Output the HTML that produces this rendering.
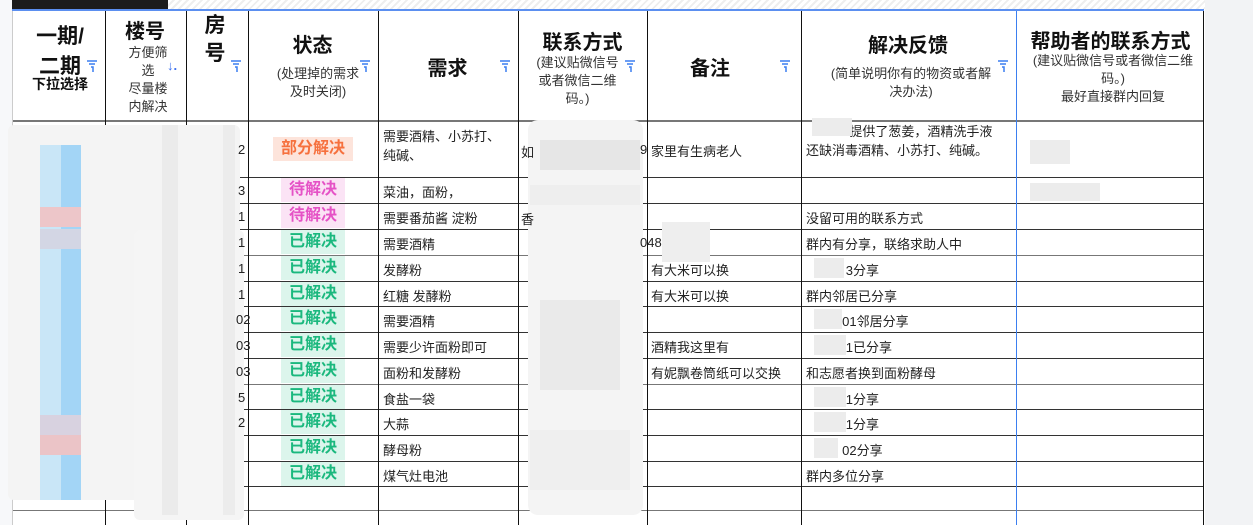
<!DOCTYPE html>
<html><head><meta charset="utf-8"><style>
*{margin:0;padding:0;box-sizing:border-box}
body{width:1253px;height:525px;background:#fff;position:relative;overflow:hidden;font-family:"Liberation Sans","Noto Sans CJK SC",sans-serif;color:#222}
.a{position:absolute}
.v{position:absolute;width:1px;background:#111}
.h{position:absolute;height:1px;background:#333;left:12px;width:1192px}
.hd{position:absolute;text-align:center;font-weight:bold;color:#111}
.sub{font-weight:normal;font-size:13px;color:#333;line-height:18px}
.t{position:absolute;font-size:13px;color:#222;white-space:nowrap}
.b{position:absolute;font-size:16px;font-weight:bold;text-align:center;line-height:24px;height:24px}
.g{color:#1bb87e;background:#dcf5ec;width:64px;left:281px}
.p{color:#e552c6;background:#fbe3f5;width:64px;left:281px}
.o{color:#f6713e;background:#fde4db;width:80px;left:273px}
.f{position:absolute;width:10px;height:12px}
.bl{position:absolute;background:#ececec}
</style></head><body>
<div class="a" style="left:1205px;top:0;width:48px;height:525px;background:#f2f3f5"></div>
<div class="a" style="left:168px;top:0;width:1037px;height:9px;background:repeating-linear-gradient(135deg,#fff 0 3px,#eee 3px 5px)"></div>
<div class="a" style="left:12px;top:0;width:156px;height:9px;background:#1c1c1c"></div>
<div class="a" style="left:12px;top:9px;width:1192px;height:2px;background:#5b8ff0"></div>
<div class="a" style="left:0;top:0;width:12px;height:525px;background:#f7f8fa"></div>

<!-- header -->
<div class="hd" style="left:18px;top:22px;width:84px;font-size:21px;line-height:30px">一期/<br>二期</div>
<div class="hd" style="left:20px;top:74px;width:80px;font-size:14px">下拉选择</div>
<div class="hd" style="left:110px;top:15px;width:70px;font-size:20px">楼号</div>
<div class="hd sub" style="left:116px;top:44px;width:64px;font-size:13px;line-height:18px">方便筛<br>选<br>尽量楼<br>内解决</div>
<div class="a" style="left:167px;top:58px;color:#3b6ff0;font-size:13px;font-weight:bold">↓.</div>
<div class="hd" style="left:195px;top:12px;width:40px;font-size:21px;line-height:28px">房<br>号</div>
<div class="hd" style="left:250px;top:29px;width:125px;font-size:20px">状态</div>
<div class="hd sub" style="left:268px;top:65px;width:100px">(处理掉的需求<br>及时关闭)</div>
<div class="hd" style="left:400px;top:52px;width:95px;font-size:20px">需求</div>
<div class="hd" style="left:520px;top:26px;width:125px;font-size:20px">联系方式</div>
<div class="hd sub" style="left:520px;top:54px;width:115px">(建议贴微信号<br>或者微信二维<br>码。)</div>
<div class="hd" style="left:660px;top:52px;width:100px;font-size:20px">备注</div>
<div class="hd" style="left:803px;top:29px;width:210px;font-size:20px">解决反馈</div>
<div class="hd sub" style="left:815px;top:65px;width:192px">(简单说明你有的物资或者解<br>决办法)</div>
<div class="hd" style="left:1018px;top:25px;width:185px;font-size:20px">帮助者的联系方式</div>
<div class="hd sub" style="left:1027px;top:52px;width:172px">(建议贴微信号或者微信二维<br>码。)<br>最好直接群内回复</div>

<!-- filter icons -->
<svg class="f" style="left:87px;top:60px" viewBox="0 0 10 12"><path d="M0 1h10M2 4h6M4 7h2v5" stroke="#3b7ff0" stroke-width="1.5" fill="none"/></svg>
<svg class="f" style="left:231px;top:60px" viewBox="0 0 10 12"><path d="M0 1h10M2 4h6M4 7h2v5" stroke="#3b7ff0" stroke-width="1.5" fill="none"/></svg>
<svg class="f" style="left:360px;top:60px" viewBox="0 0 10 12"><path d="M0 1h10M2 4h6M4 7h2v5" stroke="#3b7ff0" stroke-width="1.5" fill="none"/></svg>
<svg class="f" style="left:500px;top:60px" viewBox="0 0 10 12"><path d="M0 1h10M2 4h6M4 7h2v5" stroke="#3b7ff0" stroke-width="1.5" fill="none"/></svg>
<svg class="f" style="left:625px;top:60px" viewBox="0 0 10 12"><path d="M0 1h10M2 4h6M4 7h2v5" stroke="#3b7ff0" stroke-width="1.5" fill="none"/></svg>
<svg class="f" style="left:780px;top:60px" viewBox="0 0 10 12"><path d="M0 1h10M2 4h6M4 7h2v5" stroke="#3b7ff0" stroke-width="1.5" fill="none"/></svg>
<svg class="f" style="left:998px;top:60px" viewBox="0 0 10 12"><path d="M0 1h10M2 4h6M4 7h2v5" stroke="#3b7ff0" stroke-width="1.5" fill="none"/></svg>

<!-- horizontal lines -->
<div class="h" style="top:120px;height:2px;background:#777"></div>
<div class="h" style="top:177px"></div><div class="h" style="top:203px"></div><div class="h" style="top:229px"></div>
<div class="h" style="top:255px;background:#777"></div><div class="h" style="top:281px"></div><div class="h" style="top:306px"></div>
<div class="h" style="top:332px"></div><div class="h" style="top:358px"></div><div class="h" style="top:384px;background:#777"></div>
<div class="h" style="top:409px"></div><div class="h" style="top:435px"></div><div class="h" style="top:461px"></div>
<div class="h" style="top:486px"></div><div class="h" style="top:510px;background:#777"></div>

<!-- vertical lines -->
<div class="v" style="left:12px;top:11px;height:514px;background:#ccc"></div>
<div class="v" style="left:105px;top:11px;height:514px"></div>
<div class="v" style="left:186px;top:11px;height:514px"></div>
<div class="v" style="left:248px;top:11px;height:514px"></div>
<div class="v" style="left:378px;top:11px;height:514px"></div>
<div class="v" style="left:518px;top:11px;height:514px"></div>
<div class="v" style="left:647px;top:11px;height:514px"></div>
<div class="v" style="left:801px;top:11px;height:514px"></div>
<div class="v" style="left:1016px;top:11px;height:514px;background:#3b7ff0"></div>
<div class="v" style="left:1203px;top:11px;height:514px"></div>

<!-- blurred left -->
<div class="a" style="left:8px;top:125px;width:232px;height:375px;background:#f4f4f4;border-radius:6px"></div>
<div class="a" style="left:134px;top:230px;width:110px;height:290px;background:#f5f5f5;border-radius:6px"></div>
<div class="a" style="left:162px;top:125px;width:16px;height:390px;background:#ebebeb"></div>
<div class="a" style="left:223px;top:125px;width:12px;height:390px;background:#ececec"></div>
<div class="a" style="left:40px;top:145px;width:21px;height:355px;background:#c9e6f7"></div>
<div class="a" style="left:61px;top:145px;width:20px;height:355px;background:#a3d5f6"></div>
<div class="a" style="left:40px;top:207px;width:41px;height:20px;background:#edc6c9"></div>
<div class="a" style="left:40px;top:229px;width:41px;height:20px;background:#d3d6e4"></div>
<div class="a" style="left:40px;top:415px;width:41px;height:20px;background:#d8d2e0"></div>
<div class="a" style="left:40px;top:435px;width:41px;height:20px;background:#ebc4c7"></div>
<div class="t" style="left:238px;top:142px">2</div>
<div class="t" style="left:238px;top:183px">3</div><div class="t" style="left:238px;top:209px">1</div>
<div class="t" style="left:238px;top:235px">1</div><div class="t" style="left:238px;top:261px">1</div>
<div class="t" style="left:238px;top:287px">1</div><div class="t" style="left:236px;top:312px">02</div>
<div class="t" style="left:236px;top:338px">03</div><div class="t" style="left:236px;top:364px">03</div>
<div class="t" style="left:238px;top:390px">5</div><div class="t" style="left:238px;top:415px">2</div>

<!-- blurred contact -->
<div class="a" style="left:528px;top:120px;width:115px;height:395px;background:#f4f4f4;border-radius:10px"></div>
<div class="bl" style="left:540px;top:140px;width:100px;height:30px;background:#e6e6e6"></div>
<div class="bl" style="left:530px;top:185px;width:110px;height:20px;background:#eee"></div>
<div class="bl" style="left:540px;top:300px;width:80px;height:90px;background:#eaeaea"></div>
<div class="bl" style="left:530px;top:430px;width:100px;height:60px;background:#efefef"></div>
<div class="t" style="left:521px;top:142px">如</div><div class="t" style="left:640px;top:142px">9</div>
<div class="t" style="left:521px;top:209px">香</div><div class="t" style="left:640px;top:235px">0482</div>
<div class="bl" style="left:662px;top:222px;width:48px;height:40px;background:#eee"></div>
<div class="bl" style="left:1030px;top:140px;width:40px;height:24px"></div>
<div class="bl" style="left:1030px;top:183px;width:70px;height:18px"></div>

<!-- statuses -->
<div class="b o" style="top:137px">部分解决</div>
<div class="b p" style="top:178px">待解决</div>
<div class="b p" style="top:204px">待解决</div>
<div class="b g" style="top:230px">已解决</div><div class="b g" style="top:256px">已解决</div>
<div class="b g" style="top:282px">已解决</div><div class="b g" style="top:307px">已解决</div>
<div class="b g" style="top:333px">已解决</div><div class="b g" style="top:359px">已解决</div>
<div class="b g" style="top:385px">已解决</div><div class="b g" style="top:410px">已解决</div>
<div class="b g" style="top:436px">已解决</div><div class="b g" style="top:462px">已解决</div>

<!-- needs -->
<div class="t" style="left:383px;top:127px;line-height:19px">需要酒精、小苏打、<br>纯碱、</div>
<div class="t" style="left:383px;top:182px">菜油，面粉，</div>
<div class="t" style="left:383px;top:208px">需要番茄酱 淀粉</div>
<div class="t" style="left:383px;top:234px">需要酒精</div>
<div class="t" style="left:383px;top:260px">发酵粉</div>
<div class="t" style="left:383px;top:286px">红糖 发酵粉</div>
<div class="t" style="left:383px;top:311px">需要酒精</div>
<div class="t" style="left:383px;top:337px">需要少许面粉即可</div>
<div class="t" style="left:383px;top:363px">面粉和发酵粉</div>
<div class="t" style="left:383px;top:389px">食盐一袋</div>
<div class="t" style="left:383px;top:414px">大蒜</div>
<div class="t" style="left:383px;top:440px">酵母粉</div>
<div class="t" style="left:383px;top:466px">煤气灶电池</div>

<!-- notes -->
<div class="t" style="left:651px;top:141px">家里有生病老人</div>
<div class="t" style="left:651px;top:260px">有大米可以换</div>
<div class="t" style="left:651px;top:286px">有大米可以换</div>
<div class="t" style="left:651px;top:337px">酒精我这里有</div>
<div class="t" style="left:651px;top:363px">有妮飘卷筒纸可以交换</div>

<!-- feedback -->
<div class="t" style="left:806px;top:122px;line-height:19px">&nbsp;&nbsp;&nbsp;&nbsp;&nbsp;&nbsp;&nbsp;&nbsp;&nbsp;&nbsp;&nbsp;&nbsp;提供了葱姜，酒精洗手液<br>还缺消毒酒精、小苏打、纯碱。</div>
<div class="bl" style="left:812px;top:118px;width:40px;height:18px"></div>
<div class="t" style="left:806px;top:208px">没留可用的联系方式</div>
<div class="t" style="left:806px;top:234px">群内有分享，联络求助人中</div>
<div class="t" style="left:806px;top:260px">&nbsp;&nbsp;&nbsp;&nbsp;&nbsp;&nbsp;&nbsp;&nbsp;&nbsp;&nbsp;&nbsp;3分享</div>
<div class="t" style="left:806px;top:286px">群内邻居已分享</div>
<div class="t" style="left:806px;top:311px">&nbsp;&nbsp;&nbsp;&nbsp;&nbsp;&nbsp;&nbsp;&nbsp;&nbsp;&nbsp;01邻居分享</div>
<div class="t" style="left:806px;top:337px">&nbsp;&nbsp;&nbsp;&nbsp;&nbsp;&nbsp;&nbsp;&nbsp;&nbsp;&nbsp;&nbsp;1已分享</div>
<div class="t" style="left:806px;top:363px">和志愿者换到面粉酵母</div>
<div class="t" style="left:806px;top:389px">&nbsp;&nbsp;&nbsp;&nbsp;&nbsp;&nbsp;&nbsp;&nbsp;&nbsp;&nbsp;&nbsp;1分享</div>
<div class="t" style="left:806px;top:414px">&nbsp;&nbsp;&nbsp;&nbsp;&nbsp;&nbsp;&nbsp;&nbsp;&nbsp;&nbsp;&nbsp;1分享</div>
<div class="t" style="left:806px;top:440px">&nbsp;&nbsp;&nbsp;&nbsp;&nbsp;&nbsp;&nbsp;&nbsp;&nbsp;&nbsp;02分享</div>
<div class="t" style="left:806px;top:466px">群内多位分享</div>
<div class="bl" style="left:814px;top:258px;width:30px;height:20px"></div>
<div class="bl" style="left:814px;top:309px;width:28px;height:20px"></div>
<div class="bl" style="left:814px;top:335px;width:32px;height:20px"></div>
<div class="bl" style="left:814px;top:387px;width:32px;height:20px"></div>
<div class="bl" style="left:814px;top:412px;width:32px;height:20px"></div>
<div class="bl" style="left:814px;top:438px;width:24px;height:20px"></div>
</body></html>
